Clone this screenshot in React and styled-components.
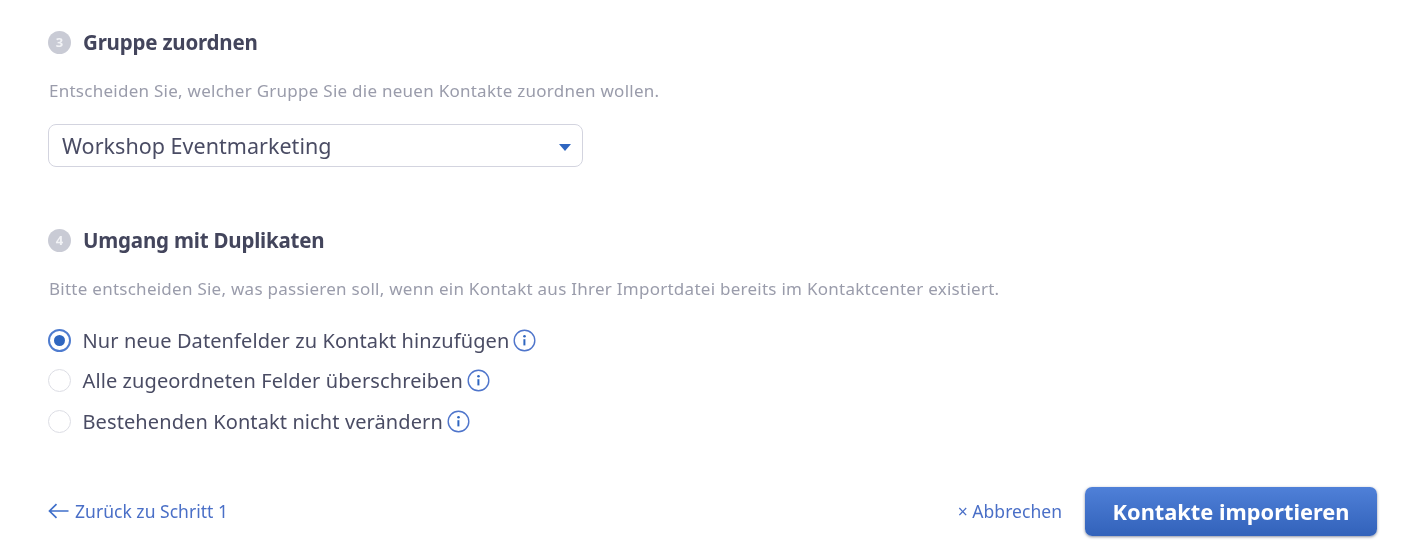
import React from "react";
import styled, { createGlobalStyle } from "styled-components";

const Global = createGlobalStyle`
  html, body { margin: 0; padding: 0; background: #fff; }
  body { font-family: "Noto Sans", "Open Sans", sans-serif; }
`;

const Page = styled.main`
  width: 1408px;
  height: 558px;
  box-sizing: border-box;
  padding: 29px 31px 0 48px;
  display: flex;
  flex-direction: column;
  overflow: hidden;
  filter: blur(0.45px);
`;

const Section = styled.section`
  display: flex;
  flex-direction: column;
  margin-bottom: ${p => p.$gap || 0}px;
`;

const Heading = styled.h2`
  margin: 0;
  height: 26px;
  display: flex;
  align-items: center;
  gap: 12px;
  font-size: 20.5px;
  font-weight: 700;
  letter-spacing: -0.2px;
  color: #43455c;
`;

const StepBadge = styled.span`
  width: 23px;
  height: 23px;
  border-radius: 50%;
  background: #c9cbd5;
  color: #f2f3f6;
  font-size: 13px;
  font-weight: 700;
  letter-spacing: 0;
  display: flex;
  align-items: center;
  justify-content: center;
  flex: none;
`;

const Description = styled.p`
  margin: 25px 0 0 1px;
  height: 22px;
  line-height: 22px;
  font-size: 17px;
  letter-spacing: 0.26px;
  color: #9a9cab;
  white-space: nowrap;
`;

const Select = styled.div`
  margin-top: 22px;
  width: 535px;
  height: 43px;
  box-sizing: border-box;
  border: 1.5px solid #d3d4df;
  border-radius: 8px;
  padding: 0 11px 0 13px;
  display: flex;
  align-items: center;
  justify-content: space-between;
  font-size: 21.5px;
  letter-spacing: 0.03px;
  color: #4a4c64;
`;

const Caret = styled.span`
  width: 0;
  height: 0;
  margin-top: 4px;
  border-left: 6px solid transparent;
  border-right: 6px solid transparent;
  border-top: 7px solid #2f66c0;
`;

const Options = styled.div`
  margin-top: 25px;
  display: flex;
  flex-direction: column;
  gap: 10.5px;
`;

const Option = styled.label`
  height: 30px;
  display: flex;
  align-items: center;
  font-size: 20px;
  letter-spacing: 0.1px;
  color: #4a4c64;
  white-space: nowrap;
`;

const Radio = styled.span`
  width: 23px;
  height: 23px;
  box-sizing: border-box;
  border-radius: 50%;
  flex: none;
  margin-right: 11.5px;
  display: flex;
  align-items: center;
  justify-content: center;
  background: #fff;
  border: ${p => (p.$checked ? "2px solid #4f7ccf" : "1.5px solid #dcdde4")};
  &::after {
    content: "";
    display: ${p => (p.$checked ? "block" : "none")};
    width: 11px;
    height: 11px;
    border-radius: 50%;
    background: #2f66c0;
  }
`;

const InfoSvg = styled.svg`
  width: 23px;
  height: 23px;
  margin-left: 4px;
  flex: none;
`;

const InfoIcon = () => (
  <InfoSvg viewBox="0 0 23 23" fill="none">
    <circle cx="11.5" cy="11.5" r="10.3" stroke="#4f75cb" strokeWidth="1.4" />
    <circle cx="11.5" cy="7.2" r="1.3" fill="#2f66c0" />
    <path d="M10.4 10.2h2v6.2h-2z" fill="#2f66c0" />
  </InfoSvg>
);

const Footer = styled.footer`
  margin-top: 50px;
  height: 50px;
  display: flex;
  align-items: center;
  justify-content: space-between;
`;

const BackLink = styled.a`
  display: flex;
  align-items: center;
  gap: 6px;
  font-size: 17.5px;
  letter-spacing: 0.03px;
  color: #4a6fc7;
`;

const Actions = styled.div`
  display: flex;
  align-items: center;
  gap: 23px;
`;

const CancelLink = styled.a`
  font-size: 17.5px;
  letter-spacing: 0.03px;
  color: #4a6fc7;
`;

const Button = styled.button`
  width: 292px;
  height: 49px;
  border: 0;
  border-radius: 7px;
  background: linear-gradient(#4f80d8, #3262ba);
  box-shadow: 0 1px 3px rgba(40, 50, 80, 0.55);
  color: #fff;
  font-family: inherit;
  font-size: 21.8px;
  font-weight: 700;
  letter-spacing: 0;
`;

const ArrowLeft = () => (
  <svg width="21" height="16" viewBox="0 0 21 16" fill="none" stroke="#3f6fca" strokeWidth="1.7">
    <path d="M20.5 8H1.5M8.5 1.2 1.5 8l7 6.8" />
  </svg>
);

const options = [
  ["Nur neue Datenfelder zu Kontakt hinzufügen", true],
  ["Alle zugeordneten Felder überschreiben", false],
  ["Bestehenden Kontakt nicht verändern", false],
];

export default function App() {
  return (
    <Page>
      <Global />
      <Section $gap={60}>
        <Heading><StepBadge>3</StepBadge>Gruppe zuordnen</Heading>
        <Description>Entscheiden Sie, welcher Gruppe Sie die neuen Kontakte zuordnen wollen.</Description>
        <Select>Workshop Eventmarketing<Caret /></Select>
      </Section>
      <Section>
        <Heading><StepBadge>4</StepBadge>Umgang mit Duplikaten</Heading>
        <Description>Bitte entscheiden Sie, was passieren soll, wenn ein Kontakt aus Ihrer Importdatei bereits im Kontaktcenter existiert.</Description>
        <Options>
          {options.map(([label, checked]) => (
            <Option key={label}>
              <Radio $checked={checked} />
              {label}
              <InfoIcon />
            </Option>
          ))}
        </Options>
      </Section>
      <Footer>
        <BackLink><ArrowLeft />Zurück zu Schritt 1</BackLink>
        <Actions>
          <CancelLink>× Abbrechen</CancelLink>
          <Button>Kontakte importieren</Button>
        </Actions>
      </Footer>
    </Page>
  );
}
